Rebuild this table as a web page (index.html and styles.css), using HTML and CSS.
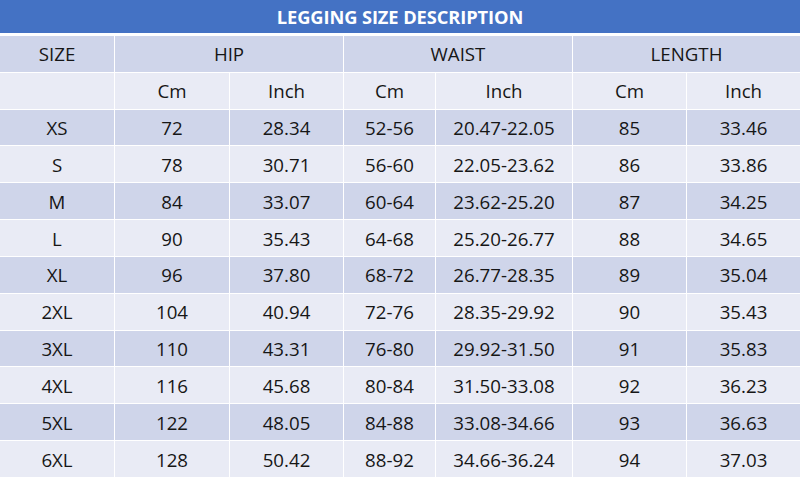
FILE: index.html
```html
<!DOCTYPE html>
<html>
<head>
<meta charset="utf-8">
<link rel="stylesheet" href="styles.css">
</head>
<body>
<div class="chart">
  <div class="title">LEGGING SIZE DESCRIPTION</div>
  <div class="grid">
    <div class="c dark">SIZE</div>
    <div class="c dark span2">HIP</div>
    <div class="c dark span2">WAIST</div>
    <div class="c dark span2">LENGTH</div>

    <div class="c light"></div>
    <div class="c light">Cm</div><div class="c light">Inch</div>
    <div class="c light">Cm</div><div class="c light">Inch</div>
    <div class="c light">Cm</div><div class="c light">Inch</div>

    <div class="c dark">XS</div><div class="c dark">72</div><div class="c dark">28.34</div><div class="c dark">52-56</div><div class="c dark">20.47-22.05</div><div class="c dark">85</div><div class="c dark">33.46</div>
    <div class="c light">S</div><div class="c light">78</div><div class="c light">30.71</div><div class="c light">56-60</div><div class="c light">22.05-23.62</div><div class="c light">86</div><div class="c light">33.86</div>
    <div class="c dark">M</div><div class="c dark">84</div><div class="c dark">33.07</div><div class="c dark">60-64</div><div class="c dark">23.62-25.20</div><div class="c dark">87</div><div class="c dark">34.25</div>
    <div class="c light">L</div><div class="c light">90</div><div class="c light">35.43</div><div class="c light">64-68</div><div class="c light">25.20-26.77</div><div class="c light">88</div><div class="c light">34.65</div>
    <div class="c dark">XL</div><div class="c dark">96</div><div class="c dark">37.80</div><div class="c dark">68-72</div><div class="c dark">26.77-28.35</div><div class="c dark">89</div><div class="c dark">35.04</div>
    <div class="c light">2XL</div><div class="c light">104</div><div class="c light">40.94</div><div class="c light">72-76</div><div class="c light">28.35-29.92</div><div class="c light">90</div><div class="c light">35.43</div>
    <div class="c dark">3XL</div><div class="c dark">110</div><div class="c dark">43.31</div><div class="c dark">76-80</div><div class="c dark">29.92-31.50</div><div class="c dark">91</div><div class="c dark">35.83</div>
    <div class="c light">4XL</div><div class="c light">116</div><div class="c light">45.68</div><div class="c light">80-84</div><div class="c light">31.50-33.08</div><div class="c light">92</div><div class="c light">36.23</div>
    <div class="c dark">5XL</div><div class="c dark">122</div><div class="c dark">48.05</div><div class="c dark">84-88</div><div class="c dark">33.08-34.66</div><div class="c dark">93</div><div class="c dark">36.63</div>
    <div class="c light">6XL</div><div class="c light">128</div><div class="c light">50.42</div><div class="c light">88-92</div><div class="c light">34.66-36.24</div><div class="c light">94</div><div class="c light">37.03</div>
  </div>
</div>
</body>
</html>
```
FILE: styles.css
```css
html, body {
  margin: 0;
  padding: 0;
  background: #ffffff;
}
.chart {
  width: 800px;
  height: 477px;
  display: flex;
  flex-direction: column;
  font-family: "Open Sans", "Liberation Sans", sans-serif;
  overflow: hidden;
}
.title {
  height: 33px;
  background: #4472c4;
  color: #ffffff;
  font-weight: bold;
  font-size: 18.3px;
  display: flex;
  align-items: center;
  justify-content: center;
  margin-bottom: 3px;
  letter-spacing: -0.1px;
}
.grid {
  flex: 1;
  display: grid;
  grid-template-columns: 114px 114px 113px 91px 136px 113px 113px;
  grid-template-rows: repeat(12, 1fr);
  gap: 1px;
  background: #ffffff;
}
.c {
  display: flex;
  align-items: center;
  justify-content: center;
  font-size: 18.7px;
  color: #161616;
}
.span2 {
  grid-column: span 2;
}
.dark {
  background: #cfd5ea;
}
.light {
  background: #e9ebf5;
}
```
